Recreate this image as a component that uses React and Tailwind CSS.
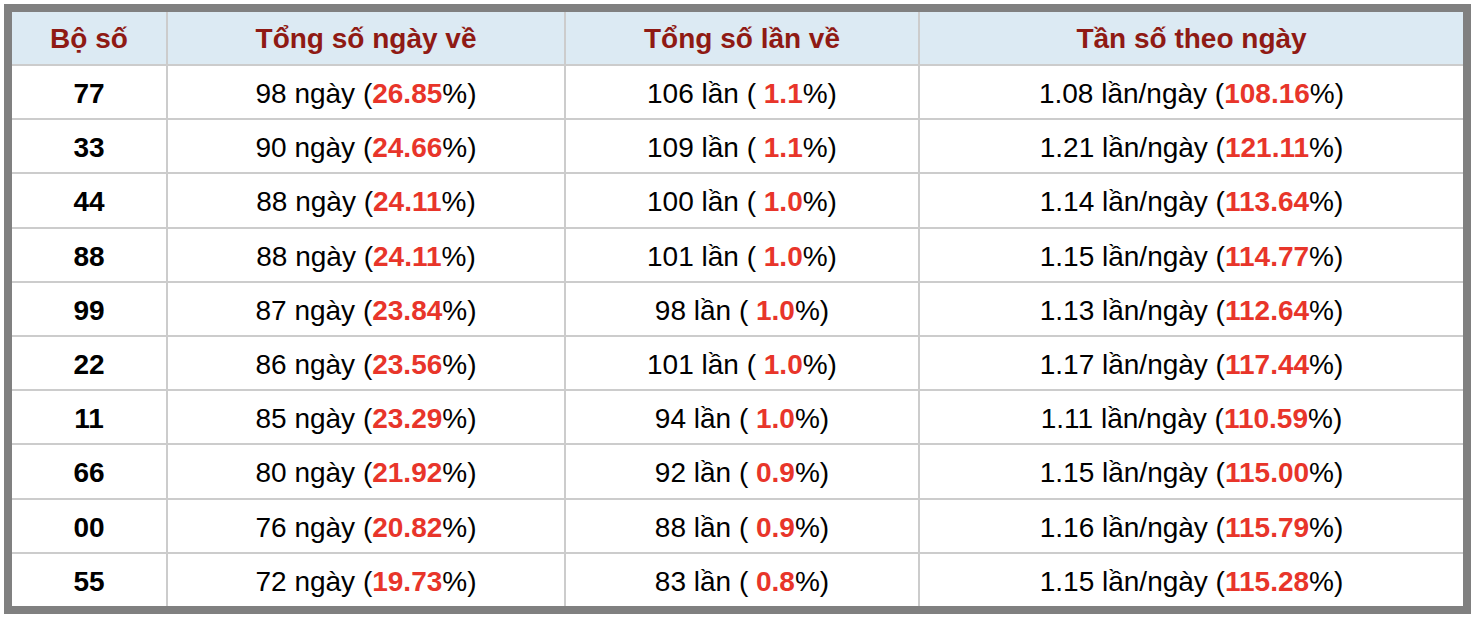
const rows = [
  { so: "77", ngay: 98, pNgay: "26.85", lan: 106, pLan: "1.1", tb: "1.08", pTb: "108.16" },
  { so: "33", ngay: 90, pNgay: "24.66", lan: 109, pLan: "1.1", tb: "1.21", pTb: "121.11" },
  { so: "44", ngay: 88, pNgay: "24.11", lan: 100, pLan: "1.0", tb: "1.14", pTb: "113.64" },
  { so: "88", ngay: 88, pNgay: "24.11", lan: 101, pLan: "1.0", tb: "1.15", pTb: "114.77" },
  { so: "99", ngay: 87, pNgay: "23.84", lan: 98, pLan: "1.0", tb: "1.13", pTb: "112.64" },
  { so: "22", ngay: 86, pNgay: "23.56", lan: 101, pLan: "1.0", tb: "1.17", pTb: "117.44" },
  { so: "11", ngay: 85, pNgay: "23.29", lan: 94, pLan: "1.0", tb: "1.11", pTb: "110.59" },
  { so: "66", ngay: 80, pNgay: "21.92", lan: 92, pLan: "0.9", tb: "1.15", pTb: "115.00" },
  { so: "00", ngay: 76, pNgay: "20.82", lan: 88, pLan: "0.9", tb: "1.16", pTb: "115.79" },
  { so: "55", ngay: 72, pNgay: "19.73", lan: 83, pLan: "0.8", tb: "1.15", pTb: "115.28" },
];

const headers = ["Bộ số", "Tổng số ngày về", "Tổng số lần về", "Tần số theo ngày"];

function Red({ children }) {
  return <span className="font-bold text-[#e8352a]">{children}</span>;
}

export default function App() {
  return (
    <div className="bg-white p-[4px] w-[1476px] h-[622px] font-['Liberation_Sans',Arial,sans-serif]">
      <div className="border-8 border-[#808080] w-[1467px]">
        <div className="grid grid-cols-[154px_396px_352px_543px] gap-[2px] bg-[#cccccc] text-[28px] leading-none">
          {headers.map((h) => (
            <div
              key={h}
              className="bg-[#dceaf3] h-[52px] pt-[2px] flex items-center justify-center font-bold text-[#8f1a14]"
            >
              {h}
            </div>
          ))}
          {rows.map((r) => (
            <Row key={r.so} r={r} />
          ))}
        </div>
      </div>
    </div>
  );
}

function Row({ r }) {
  const cell = "bg-white h-[52.2px] pt-[4px] flex items-center justify-center text-black";
  return (
    <>
      <div className={cell + " font-bold"}>{r.so}</div>
      <div className={cell}>
        <span className="whitespace-pre">
          {r.ngay} ngày (<Red>{r.pNgay}</Red>%)
        </span>
      </div>
      <div className={cell}>
        <span className="whitespace-pre">
          {r.lan} lần ( <Red>{r.pLan}</Red>%)
        </span>
      </div>
      <div className={cell}>
        <span className="whitespace-pre">
          {r.tb} lần/ngày (<Red>{r.pTb}</Red>%)
        </span>
      </div>
    </>
  );
}
